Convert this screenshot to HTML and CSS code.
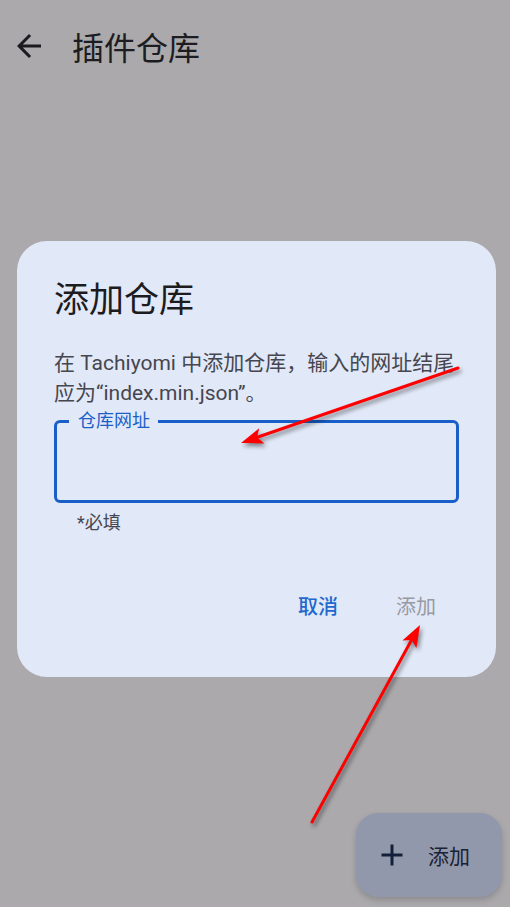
FILE: index.html
```html
<!DOCTYPE html>
<html lang="zh-CN">
<head>
<meta charset="utf-8">
<title>插件仓库</title>
<link rel="stylesheet" href="styles.css">
</head>
<body>
<div class="page">
  <header class="topbar">
    <svg class="back" viewBox="0 0 24 24" width="36" height="36"><path d="M20 11H7.83l5.59-5.59L12 4l-8 8 8 8 1.41-1.41L7.83 13H20v-2z"/></svg>
    <h1 class="title">插件仓库</h1>
  </header>

  <button class="fab">
    <svg class="fab-icon" viewBox="0 0 24 24" width="24" height="24"><path d="M12 1.5v21M1.5 12h21"/></svg>
    <span class="fab-label">添加</span>
  </button>

  <div class="scrim">
    <div class="dialog">
      <h2 class="dialog-title">添加仓库</h2>
      <p class="dialog-text">在 Tachiyomi 中添加仓库，输入的网址结尾应为“index.min.json”。</p>
      <div class="field">
        <span class="field-label">仓库网址</span>
      </div>
      <div class="field-hint">*必填</div>
      <div class="actions">
        <span class="btn btn-cancel">取消</span>
        <span class="btn btn-add">添加</span>
      </div>
    </div>
  </div>

  <svg class="annotations" viewBox="0 0 510 907" width="510" height="907">
    <g class="arrow">
      <line x1="458" y1="368" x2="258" y2="437"/>
      <polygon points="241,443 259.2,428.2 257.1,437.4 264.4,443.4"/>
    </g>
    <g class="arrow">
      <line x1="312" y1="822" x2="411" y2="641"/>
      <polygon points="420,625 416.4,648.1 411.8,639.9 402.4,640.5"/>
    </g>
  </svg>
</div>
</body>
</html>
```

FILE: styles.css
```css
* { box-sizing: border-box; }
html, body { margin: 0; padding: 0; }
body {
  background: #aba9ac;
  font-family: Roboto, "Noto Sans CJK SC", sans-serif;
  color: #1b1b1f;
}
.page {
  position: relative;
  width: 510px;
  height: 907px;
  overflow: hidden;
}
.topbar {
  display: flex;
  align-items: center;
  height: 92px;
  padding-left: 11px;
}
.back { fill: #1b1b1f; }
.title {
  margin: 0 0 0 25px;
  font-size: 32px;
  font-weight: 400;
  color: #1d1d21;
}
.scrim {
  position: absolute;
  inset: 0;
  display: flex;
  align-items: flex-start;
  justify-content: flex-start;
  padding: 241px 0 0 17px;
}
.dialog {
  width: 479px;
  height: 436px;
  background: #e1e8f7;
  border-radius: 30px;
  padding: 36px 33px 0 37px;
  display: flex;
  flex-direction: column;
}
.dialog-title {
  margin: 0;
  font-size: 35px;
  line-height: 48px;
  font-weight: 400;
  color: #1c1c20;
}
.dialog-text {
  margin: 23px 0 0;
  font-size: 21px;
  line-height: 30px;
  color: #45464f;
}
.field {
  position: relative;
  margin-top: 12px;
  margin-right: 4px;
  height: 83px;
  border: 3px solid #1a5fc8;
  border-radius: 6px;
}
.field-label {
  position: absolute;
  top: -13.5px;
  left: 12px;
  padding: 0 8px 0 9px;
  background: #e1e8f7;
  font-size: 18px;
  line-height: 22px;
  color: #1a5fc8;
}
.field-hint {
  margin: 8px 0 0 23px;
  font-size: 18px;
  line-height: 24px;
  color: #45464f;
}
.actions {
  display: flex;
  justify-content: flex-end;
  gap: 58px;
  margin-top: 58px;
  padding-right: 27px;
}
.btn {
  font-size: 20px;
  line-height: 28px;
  font-weight: 500;
}
.btn-cancel { color: #2268ce; }
.btn-add { color: #979aa2; font-weight: 400; }
.fab {
  position: absolute;
  right: 8px;
  bottom: 10px;
  width: 146px;
  height: 84px;
  border: none;
  border-radius: 22px;
  background: #9198ab;
  display: flex;
  align-items: center;
  padding: 0 0 0 24px;
  box-shadow: 0 3px 6px rgba(0,0,0,0.18);
  font-family: inherit;
}
.fab-icon {
  stroke: #14203a;
  stroke-width: 3;
  fill: none;
}
.fab-label {
  margin-left: 24px;
  font-size: 21px;
  color: #1a2235;
}
.annotations {
  position: absolute;
  left: 0;
  top: 0;
  pointer-events: none;
}
.arrow {
  filter: drop-shadow(2px 3px 2px rgba(0,0,0,0.45));
}
.arrow line {
  stroke: #ff0000;
  stroke-width: 3;
  stroke-linecap: round;
}
.arrow polygon {
  fill: #ff0000;
}
```
